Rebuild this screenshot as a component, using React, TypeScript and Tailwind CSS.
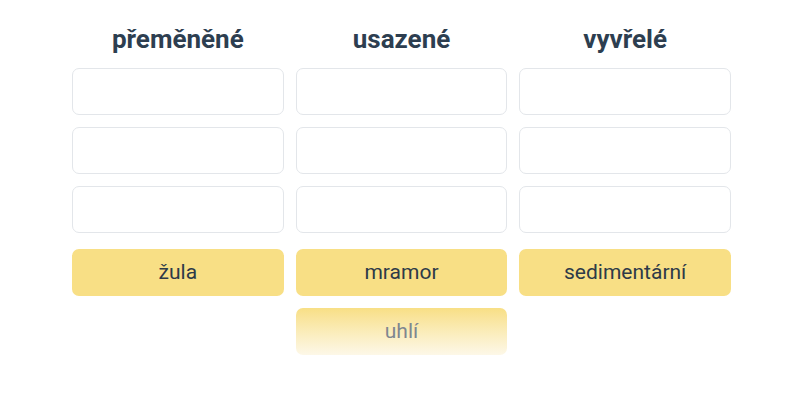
export default function App() {
  const cols = ["přeměněné", "usazené", "vyvřelé"];
  return (
    <div className="w-[800px] h-[400px] bg-white" style={{ fontFamily: "Roboto, 'Noto Sans', sans-serif" }}>
      <div className="w-[659px] ml-[72px] pt-[20px]">
        <div className="grid grid-cols-3 gap-x-[12px]">
          {cols.map((c) => (
            <div key={c} className="h-[38px] flex items-center justify-center text-[26px] font-bold text-[#2d3e50]">
              {c}
            </div>
          ))}
        </div>
        <div className="grid grid-cols-3 gap-x-[12px] gap-y-[12px] mt-[10px]">
          {Array.from({ length: 9 }).map((_, i) => (
            <div key={i} className="h-[47px] rounded-[7px] border border-[#e3e6ea] bg-white" />
          ))}
        </div>
        <div className="grid grid-cols-3 gap-x-[12px] gap-y-[12px] mt-[16px]">
          {["žula", "mramor", "sedimentární"].map((t) => (
            <div key={t} className="h-[47px] rounded-[7px] bg-[#f8df85] flex items-center justify-center text-[21px] text-[#2d3a48]">
              {t}
            </div>
          ))}
          <div />
          <div className="h-[47px] rounded-[7px] bg-gradient-to-b from-[#f8df85] to-[#fdf8e8] flex items-center justify-center text-[21px] text-[#7f8690]">
            uhlí
          </div>
          <div />
        </div>
      </div>
    </div>
  );
}
